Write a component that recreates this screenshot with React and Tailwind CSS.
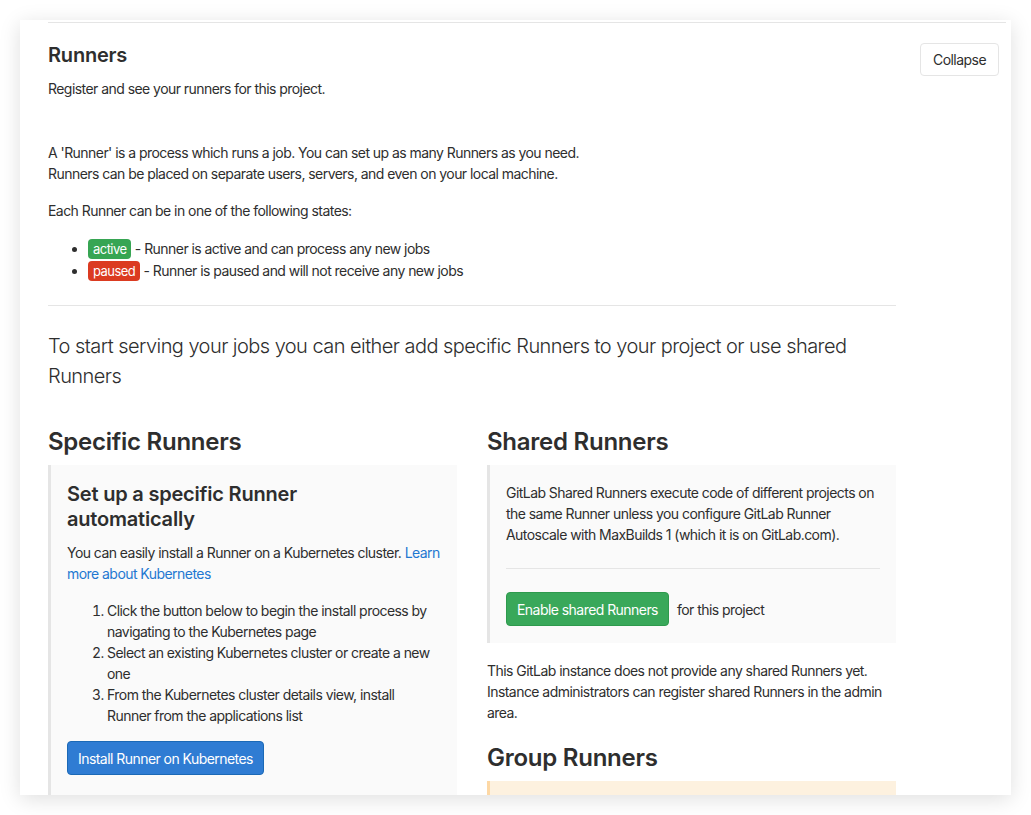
import React from "react";

export default function App() {
  return (
    <div className="min-h-[815px] w-[1031px] bg-white pt-5 pl-5 tracking-[-0.55px] text-[#2e2e2e]" style={{ fontFamily: "Inter, 'Noto Sans', sans-serif" }}>
      <div className="h-[775px] w-[991px] overflow-hidden bg-white shadow-[0_4px_20px_rgba(0,0,0,0.13)]">
        <div className="ml-[28px] mr-[5px] mt-[2px] border-t border-[#e5e5e5]">
          <div className="flex items-start justify-between pt-5">
            <div>
              <h4 className="text-[20px] font-semibold leading-6 tracking-[-0.2px]">Runners</h4>
              <p className="mt-[12px] text-[14px] leading-5">Register and see your runners for this project.</p>
            </div>
            <button className="mr-[7px] h-[33px] w-[79px] rounded border border-[#e5e5e5] bg-white text-[14px] text-[#2e2e2e]">Collapse</button>
          </div>

          <div className="w-[848px] text-[14px] leading-[21px]">
            <p className="mt-[43px]">
              A 'Runner' is a process which runs a job. You can set up as many Runners as you need.
              <br />
              Runners can be placed on separate users, servers, and even on your local machine.
            </p>
            <p className="mt-4">Each Runner can be in one of the following states:</p>
            <ul className="mt-[17px] list-disc pl-10 leading-[22px]">
              <li>
                <span className="inline-block rounded bg-[#37a553] px-[5px] text-[13px] leading-[20px] text-white">active</span> - Runner is active and can process any new jobs
              </li>
              <li>
                <span className="inline-block rounded bg-[#db3b21] px-[5px] text-[13px] leading-[20px] text-white">paused</span> - Runner is paused and will not receive any new jobs
              </li>
            </ul>
            <hr className="mt-[23px] border-[#e5e5e5]" />
            <p className="mt-[25px] text-[20px] font-light leading-[30px]">
              To start serving your jobs you can either add specific Runners to your project or use shared Runners
            </p>

            <div className="mt-[36px] grid grid-cols-2 gap-[30px]">
              <div>
                <h3 className="text-[24px] font-semibold leading-[29px] tracking-[-0.25px]">Specific Runners</h3>
                <div className="mt-[9px] border-l-[3px] border-[#e5e5e5] bg-[#fafafa] px-4 pt-[17px] pb-[60px]">
                  <h4 className="w-[330px] text-[20px] font-semibold leading-[25px] tracking-[-0.2px]">Set up a specific Runner automatically</h4>
                  <p className="mt-[10px]">
                    You can easily install a Runner on a Kubernetes cluster.{" "}
                    <a className="text-[#1f78d1]" href="#">Learn more about Kubernetes</a>
                  </p>
                  <ol className="mt-4 list-decimal pl-10">
                    <li>Click the button below to begin the install process by navigating to the Kubernetes page</li>
                    <li>Select an existing Kubernetes cluster or create a new one</li>
                    <li>From the Kubernetes cluster details view, install Runner from the applications list</li>
                  </ol>
                  <button className="mt-[15px] h-[34px] rounded border border-[#1b69b6] bg-[#2f7cd3] px-[10px] text-[14px] text-white">Install Runner on Kubernetes</button>
                </div>
              </div>

              <div>
                <h3 className="text-[24px] font-semibold leading-[29px] tracking-[-0.25px]">Shared Runners</h3>
                <div className="mt-[9px] border-l-[3px] border-[#e5e5e5] bg-[#fafafa] px-4 pt-[17px] pb-[17px]">
                  <p>
                    GitLab Shared Runners execute code of different projects on the same Runner unless you configure GitLab Runner Autoscale with MaxBuilds 1 (which it is on GitLab.com).
                  </p>
                  <hr className="mt-[23px] mb-[23px] border-[#e5e5e5]" />
                  <div className="flex items-center">
                    <button className="h-[34px] rounded border border-[#2e9a4d] bg-[#39a85a] px-[10px] text-[14px] text-white">Enable shared Runners</button>
                    <span className="ml-2">for this project</span>
                  </div>
                </div>
                <p className="mt-[17px]">
                  This GitLab instance does not provide any shared Runners yet. Instance administrators can register shared Runners in the admin area.
                </p>
                <h3 className="mt-[20px] text-[24px] font-semibold leading-[29px] tracking-[-0.25px]">Group Runners</h3>
                <div className="mt-[9px] h-[80px] border-l-[3px] border-[#fdd8a5] bg-[#fdf1df]"></div>
              </div>
            </div>
          </div>
        </div>
      </div>
    </div>
  );
}
